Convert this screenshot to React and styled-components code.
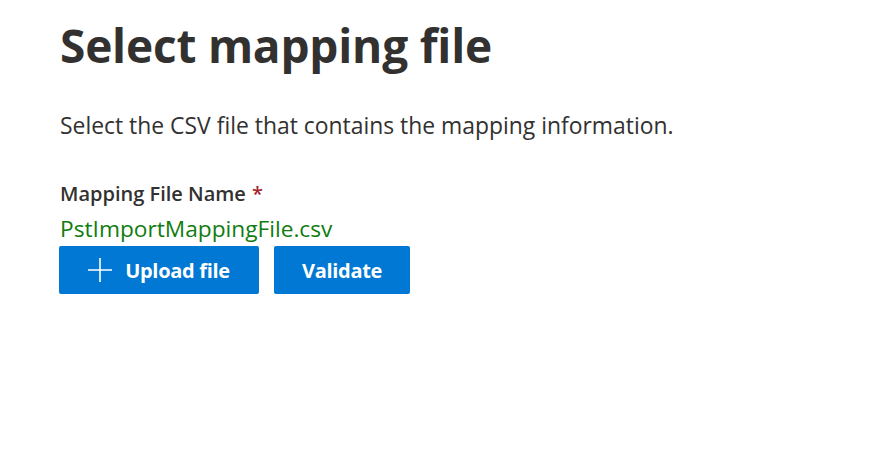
import React from "react";
import styled, { createGlobalStyle } from "styled-components";

const Global = createGlobalStyle`
  html, body { margin: 0; padding: 0; background: #ffffff; }
  body { font-family: "Open Sans", "Noto Sans", sans-serif; color: #323130; }
`;

const Page = styled.main`
  display: flex;
  flex-direction: column;
  padding: 17px 60px 0;
`;

const Title = styled.h1`
  margin: 0;
  font-size: 46px;
  font-weight: 700;
  line-height: 56px;
  letter-spacing: -0.2px;
  color: #323130;
`;

const Description = styled.p`
  margin: 37px 0 0;
  font-size: 22.9px;
  line-height: 32px;
  color: #323130;
`;

const Field = styled.div`
  display: flex;
  flex-direction: column;
  margin-top: 38px;
`;

const Label = styled.label`
  font-size: 20px;
  font-weight: 600;
  line-height: 28px;
  color: #323130;
`;

const Required = styled.span`
  color: #a4262c;
  margin-left: 6px;
`;

const FileName = styled.div`
  font-size: 22.7px;
  line-height: 30px;
  color: #107c10;
  margin-top: 6px;
`;

const Actions = styled.div`
  display: flex;
  gap: 15px;
  margin: 2px 0 0 -1px;
`;

const Button = styled.button`
  display: inline-flex;
  align-items: center;
  justify-content: center;
  gap: 13px;
  width: ${(p) => p.$width}px;
  height: 48px;
  padding: 0;
  border: none;
  border-radius: 2px;
  background: #0078d4;
  color: #ffffff;
  font-family: inherit;
  font-size: 20px;
  font-weight: 700;
  letter-spacing: -0.3px;
  cursor: pointer;
`;

const PlusIcon = () => (
  <svg width="24" height="24" viewBox="0 0 24 24" aria-hidden="true">
    <path d="M12 0v24M0 12h24" stroke="#ffffff" strokeWidth="1.6" fill="none" />
  </svg>
);

export default function App() {
  return (
    <>
      <Global />
      <Page>
        <Title>Select mapping file</Title>
        <Description>Select the CSV file that contains the mapping information.</Description>
        <Field>
          <Label>
            Mapping File Name<Required>*</Required>
          </Label>
          <FileName>PstImportMappingFile.csv</FileName>
          <Actions>
            <Button $width={200}>
              <PlusIcon />
              Upload file
            </Button>
            <Button $width={136}>Validate</Button>
          </Actions>
        </Field>
      </Page>
    </>
  );
}
